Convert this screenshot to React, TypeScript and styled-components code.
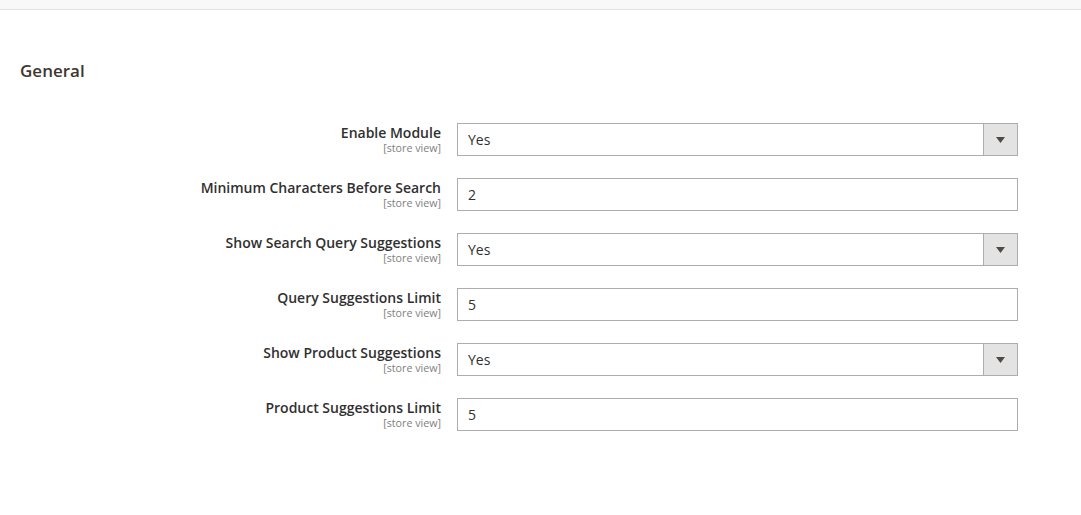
import React from "react";
import styled, { createGlobalStyle } from "styled-components";

const G = createGlobalStyle`
  body { margin:0; background:#fff; font-family:"Open Sans", sans-serif; color:#303030; }
`;
const Top = styled.div`height:9px;background:#f8f8f8;border-bottom:1px solid #e3e3e3;`;
const Title = styled.h2`margin:0;padding:50px 20px 0;font-size:17px;font-weight:600;line-height:22px;color:#41362f;`;
const Rows = styled.div`display:flex;flex-direction:column;gap:22px;padding-top:41px;`;
const Row = styled.div`display:flex;align-items:flex-start;`;
const LabelCol = styled.div`width:441px;text-align:right;padding-top:1px;`;
const Label = styled.div`font-size:14px;font-weight:600;line-height:18px;color:#303030;`;
const Hint = styled.div`font-size:10.7px;line-height:13px;color:#808080;`;
const Field = styled.div`margin-left:16px;width:561px;height:33px;box-sizing:border-box;border:1px solid #adadad;display:flex;align-items:center;font-size:14px;color:#303030;`;
const Value = styled.span`flex:1;padding-left:10px;`;
const Btn = styled.div`width:33px;height:31px;background:#e3e3e3;border-left:1px solid #adadad;display:flex;align-items:center;justify-content:center;`;

const rows: [string, string, boolean][] = [
  ["Enable Module", "Yes", true],
  ["Minimum Characters Before Search", "2", false],
  ["Show Search Query Suggestions", "Yes", true],
  ["Query Suggestions Limit", "5", false],
  ["Show Product Suggestions", "Yes", true],
  ["Product Suggestions Limit", "5", false],
];

export default function App() {
  return (
    <>
      <G />
      <Top />
      <Title>General</Title>
      <Rows>
        {rows.map(([l, v, s]) => (
          <Row key={l}>
            <LabelCol><Label>{l}</Label><Hint>[store view]</Hint></LabelCol>
            <Field>
              <Value>{v}</Value>
              {s && <Btn><svg width="9" height="6" viewBox="0 0 9 6"><path d="M0 0H9L4.5 6Z" fill="#514943"/></svg></Btn>}
            </Field>
          </Row>
        ))}
      </Rows>
    </>
  );
}
